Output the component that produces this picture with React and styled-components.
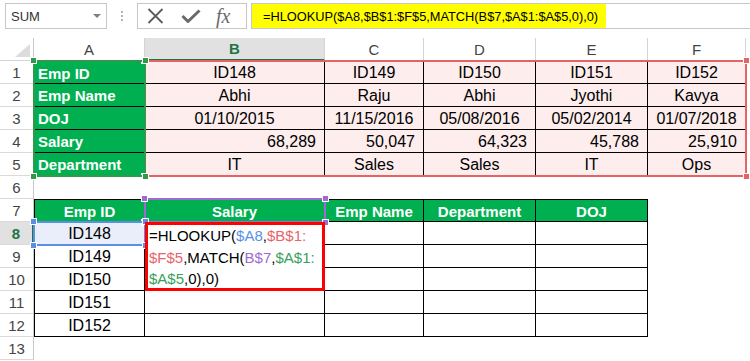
import React from "react";
import styled, { createGlobalStyle, css } from "styled-components";

const GlobalStyle = createGlobalStyle`
  html, body { margin: 0; padding: 0; background: #fff; }
  body {
    width: 750px;
    height: 361px;
    overflow: hidden;
    font-family: "Liberation Sans", Arial, sans-serif;
    color: #000;
  }
`;

const Window = styled.div`
  width: 750px;
  height: 361px;
  display: flex;
  flex-direction: column;
`;

// formula bar along the top
const FormulaBar = styled.div`
  height: 38px;
  flex: none;
  box-sizing: border-box;
  display: flex;
  align-items: flex-start;
  padding: 3px 0 0 5px;
`;

const NameBox = styled.div`
  width: 102px;
  height: 26px;
  box-sizing: border-box;
  border: 1px solid #c6c6c6;
  display: flex;
  align-items: center;
  justify-content: space-between;
  padding: 0 5px 0 5px;
  font-size: 13px;
  color: #333;
`;

const DropArrow = styled.span`
  width: 0;
  height: 0;
  border-left: 4px solid transparent;
  border-right: 4px solid transparent;
  border-top: 4px solid #808080;
`;

const Grip = styled.div`
  display: flex;
  flex-direction: column;
  gap: 2px;
  margin: 8px 14px 0 14px;
  span {
    width: 2px;
    height: 2px;
    background: #b4b4b4;
  }
`;

const FxBox = styled.div`
  width: 110px;
  height: 26px;
  box-sizing: border-box;
  border: 1px solid #c6c6c6;
  display: flex;
  align-items: center;
  padding-left: 9px;
  gap: 17px;
  color: #5c5c5c;
`;

const FxText = styled.span`
  font-family: "Liberation Serif", "Times New Roman", serif;
  font-style: italic;
  font-size: 20px;
  color: #6a6a6a;
  margin-left: -2px;
  line-height: 1;
`;

const FormulaInput = styled.div`
  flex: 1;
  height: 26px;
  box-sizing: border-box;
  margin-left: 4px;
  border: 1px solid #c6c6c6;
  border-right: none;
  display: flex;
`;

const FormulaText = styled.span`
  background: #ffff00;
  display: flex;
  align-items: center;
  padding: 0 8px 0 11px;
  font-size: 12.8px;
  white-space: nowrap;
`;

// sheet grid, every part placed by row / column
const Sheet = styled.div`
  display: grid;
  grid-template-columns: 34px 111px 180px 99px 112px 112px 98px 1fr;
  grid-template-rows: repeat(14, 23px);
  font-size: 16px;
`;

const place = css`
  grid-row: ${(p) => p.$r};
  grid-column: ${(p) => p.$c};
`;

const Corner = styled.div`
  ${place}
  display: flex;
  justify-content: flex-end;
  align-items: flex-end;
  padding: 0 3px 3px 0;
  border-right: 1px solid #c8c8c8;
  border-bottom: 1px solid #d4d4d4;
  box-sizing: border-box;
`;

const CornerMark = styled.span`
  width: 15px;
  height: 13px;
  background: #dcdcdc;
  clip-path: polygon(100% 0, 100% 100%, 0 100%);
`;

const ColHead = styled.div`
  ${place}
  box-sizing: border-box;
  display: flex;
  align-items: center;
  justify-content: center;
  font-size: 15px;
  color: #444;
  border-right: 1px solid #d4d4d4;
  border-bottom: 1px solid #d4d4d4;
  ${(p) =>
    p.$active &&
    css`
      background: #e1e1e1;
      color: #217346;
      font-weight: bold;
      border-bottom: 2px solid #217346;
    `}
`;

const RowHead = styled.div`
  ${place}
  box-sizing: border-box;
  display: flex;
  align-items: center;
  justify-content: center;
  padding-top: 1px;
  font-size: 15px;
  color: #444;
  border-right: 1px solid #c8c8c8;
  border-bottom: 1px solid #dadada;
  ${(p) =>
    p.$active &&
    css`
      background: #e1e1e1;
      color: #217346;
      font-weight: bold;
      border-right: 2px solid #217346;
    `}
`;

const variants = {
  label: css`
    background: #00b050;
    color: #fff;
    font-weight: bold;
    font-size: 15px;
    justify-content: flex-start;
    padding-left: 4px;
  `,
  data: css`
    background: #fdeded;
  `,
  num: css`
    background: #fdeded;
    justify-content: flex-end;
    padding-right: 8px;
  `,
  head: css`
    background: #00b050;
    color: #fff;
    font-weight: bold;
    font-size: 15px;
  `,
  box: css`
    background: #fff;
  `,
  picked: css`
    background: #e9eefa;
  `,
};

const Cell = styled.div`
  ${place}
  box-sizing: border-box;
  display: flex;
  align-items: center;
  justify-content: center;
  padding-top: 1px;
  white-space: nowrap;
  overflow: hidden;
  border-right: 1px solid #000;
  border-bottom: 1px solid #000;
  ${(p) => p.$top && "border-top: 1px solid #000;"}
  ${(p) => p.$left && "border-left: 1px solid #000;"}
  ${(p) => variants[p.$variant]}
`;

// reference highlight boxes drawn over the cells
const RefBox = styled.div`
  ${place}
  margin: -1px;
  border: 2px solid ${(p) => p.$color};
  position: relative;
  z-index: 2;
  pointer-events: none;
`;

const Handle = styled.span`
  position: absolute;
  width: 5px;
  height: 5px;
  background: ${(p) => p.$color};
  border: 1px solid #fff;
  ${(p) => (p.$y === "top" ? "top: -5px;" : "bottom: -5px;")}
  ${(p) => (p.$x === "left" ? "left: -5px;" : "right: -5px;")}
`;

// in-cell formula editor on B8, spilling over B9:B10
const Editor = styled.div`
  grid-column: 3;
  grid-row: 9 / 12;
  position: relative;
  z-index: 3;
  box-sizing: border-box;
  border: 3px solid #ff0000;
  background: #fff;
  padding: 0 0 0 1px;
  font-size: 15px;
  line-height: 21.5px;
`;

const Line = styled.div`
  white-space: nowrap;
`;

const Ref = styled.span`
  color: ${(p) => p.$c};
`;

const colors = {
  blue: "#5b8fe6",
  red: "#e8646a",
  purple: "#9d6bd2",
  green: "#36a15a",
};

const topRows = [
  ["Emp ID", "ID148", "ID149", "ID150", "ID151", "ID152"],
  ["Emp Name", "Abhi", "Raju", "Abhi", "Jyothi", "Kavya"],
  ["DOJ", "01/10/2015", "11/15/2016", "05/08/2016", "05/02/2014", "01/07/2018"],
  ["Salary", "68,289", "50,047", "64,323", "45,788", "25,910"],
  ["Department", "IT", "Sales", "Sales", "IT", "Ops"],
];

const tableHead = ["Emp ID", "Salary", "Emp Name", "Department", "DOJ"];
const ids = ["ID148", "ID149", "ID150", "ID151", "ID152"];
const letters = ["A", "B", "C", "D", "E", "F"];

const Highlight = ({ col, row, color }) => (
  <RefBox $c={col} $r={row} $color={color}>
    <Handle $color={color} $y="top" $x="left" />
    <Handle $color={color} $y="top" $x="right" />
    <Handle $color={color} $y="bottom" $x="left" />
    <Handle $color={color} $y="bottom" $x="right" />
  </RefBox>
);

const XIcon = () => (
  <svg width="17" height="16" viewBox="0 0 17 16">
    <path d="M1.5 1 L15.5 15 M15.5 1 L1.5 15" stroke="#5c5c5c" strokeWidth="1.8" fill="none" />
  </svg>
);

const CheckIcon = () => (
  <svg width="20" height="14" viewBox="0 0 20 14">
    <path d="M1.5 7 L7 12.5 L18.5 1.5" stroke="#6a6a6a" strokeWidth="3" fill="none" strokeLinejoin="round" />
  </svg>
);

const App = () => {
  return (
    <Window>
      <GlobalStyle />
      <FormulaBar>
        <NameBox>
          SUM
          <DropArrow />
        </NameBox>
        <Grip>
          <span />
          <span />
          <span />
        </Grip>
        <FxBox>
          <XIcon />
          <CheckIcon />
          <FxText>fx</FxText>
        </FxBox>
        <FormulaInput>
          <FormulaText>=HLOOKUP($A8,$B$1:$F$5,MATCH(B$7,$A$1:$A$5,0),0)</FormulaText>
        </FormulaInput>
      </FormulaBar>

      <Sheet>
        <Corner $r={1} $c={1}>
          <CornerMark />
        </Corner>
        {letters.map((l, j) => (
          <ColHead key={l} $r={1} $c={j + 2} $active={l === "B"}>
            {l}
          </ColHead>
        ))}

        {Array.from({ length: 13 }, (_, i) => (
          <RowHead key={"h" + i} $r={i + 2} $c={1} $active={i + 1 === 8}>
            {i + 1}
          </RowHead>
        ))}

        {topRows.map((row, i) =>
          row.map((v, j) => (
            <Cell
              key={"t" + i + j}
              $r={i + 2}
              $c={j + 2}
              $top={i === 0}
              $variant={j === 0 ? "label" : i === 3 ? "num" : "data"}
            >
              {v}
            </Cell>
          ))
        )}

        {tableHead.map((h, j) => (
          <Cell key={"th" + j} $r={8} $c={j + 2} $variant="head" $top $left={j === 0}>
            {h}
          </Cell>
        ))}

        {ids.map((id, i) =>
          [id, "", "", "", ""].map((v, j) => (
            <Cell
              key={id + j}
              $r={i + 9}
              $c={j + 2}
              $left={j === 0}
              $variant={i === 0 && j === 0 ? "picked" : "box"}
            >
              {v}
            </Cell>
          ))
        )}

        <Highlight col="3 / 8" row="2 / 7" color="#e46466" />
        <Highlight col="2" row="2 / 7" color="#2f9a4c" />
        <Highlight col="3" row="8" color={colors.purple} />
        <Highlight col="2" row="9" color={colors.blue} />

        <Editor>
          <Line>
            =HLOOKUP(<Ref $c={colors.blue}>$A8</Ref>,<Ref $c={colors.red}>$B$1:</Ref>
          </Line>
          <Line>
            <Ref $c={colors.red}>$F$5</Ref>,MATCH(<Ref $c={colors.purple}>B$7</Ref>,
            <Ref $c={colors.green}>$A$1:</Ref>
          </Line>
          <Line>
            <Ref $c={colors.green}>$A$5</Ref>,0),0)
          </Line>
        </Editor>
      </Sheet>
    </Window>
  );
};

export default App;
